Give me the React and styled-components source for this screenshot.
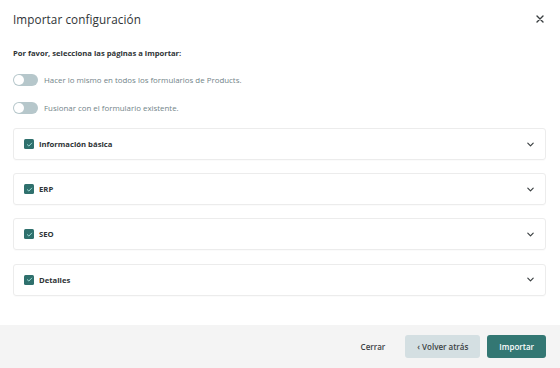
import React from 'react'
import styled, { createGlobalStyle } from 'styled-components'

const Global = createGlobalStyle`
  body {
    margin: 0;
    font-family: "Open Sans", "Noto Sans", sans-serif;
    background: #fff;
  }
`;

const Modal = styled.div`
  width: 560px;
  height: 368px;
  display: flex;
  flex-direction: column;
  background: #fff;
  color: #33393b;
`;

const Body = styled.div`
  flex: 1;
  padding: 0 14px 0 13px;
`;

const Header = styled.div`
  display: flex;
  align-items: center;
  justify-content: space-between;
  height: 38px;
  h1 {
    margin: 0;
    font-size: 11.7px;
    font-weight: 400;
    color: #2f3436;
    letter-spacing: 0.1px;
  }
`;

const Close = styled.button`
  border: 0;
  background: none;
  padding: 0;
  margin-right: 2px;
  display: flex;
  color: #444;
  cursor: pointer;
`;

const Lead = styled.p`
  margin: 9.5px 0 7.5px;
  font-size: 7.65px;
  line-height: 11px;
  font-weight: 700;
  color: #2f3436;
`;

const ToggleRow = styled.label`
  display: flex;
  align-items: center;
  gap: 6px;
  height: 28px;
  font-size: 7.9px;
  color: #728489;
`;

const Switch = styled.span`
  position: relative;
  width: 25px;
  height: 12px;
  border-radius: 6px;
  background: #b6c7cb;
  &::after {
    content: "";
    position: absolute;
    left: 1px;
    top: 1px;
    width: 10px;
    height: 10px;
    border-radius: 50%;
    background: #fff;
  }
`;

const Sections = styled.div`
  display: flex;
  flex-direction: column;
  gap: 13.2px;
  margin-top: 6px;
`;

const Card = styled.div`
  box-sizing: border-box;
  height: 32px;
  border: 1px solid #ececec;
  border-radius: 3px;
  display: flex;
  align-items: center;
  padding: 0 10px 0 10px;
  box-shadow: 0 1px 1px rgba(0, 0, 0, 0.02);
`;

const Check = styled.span`
  width: 10px;
  height: 10px;
  border-radius: 1.5px;
  background: #2f706d;
  display: flex;
  align-items: center;
  justify-content: center;
  margin-right: 5px;
`;

const CardLabel = styled.span`
  flex: 1;
  font-size: 7.7px;
  font-weight: 700;
  color: #2f3436;
`;

const Footer = styled.div`
  height: 43px;
  background: #f4f4f4;
  display: flex;
  align-items: center;
  justify-content: flex-end;
  gap: 7px;
  padding: 0 14px;
`;

const Button = styled.button`
  height: 23px;
  border: 0;
  border-radius: 3px;
  font-family: inherit;
  font-size: 8px;
  font-weight: 600;
  padding: 0 ${p => p.$pad ?? 12}px;
  margin-right: ${p => p.$after ?? 0}px;
  background: ${p => p.$variant === 'primary' ? '#337773' : p.$variant === 'secondary' ? '#d4dfe2' : 'transparent'};
  color: ${p => p.$variant === 'primary' ? '#fff' : '#3b4244'};
  cursor: pointer;
`;

const sections = ['Información básica', 'ERP', 'SEO', 'Detalles'];

const Chevron = () => (
  <svg width="9" height="9" viewBox="0 0 10 10" fill="none">
    <path d="M2 3.5 L5 6.5 L8 3.5" stroke="#3a3f41" strokeWidth="1.3" strokeLinecap="round" strokeLinejoin="round" />
  </svg>
);

export default function App() {
  return (
    <Modal>
      <Global />
      <Body>
        <Header>
          <h1>Importar configuración</h1>
          <Close aria-label="Cerrar">
            <svg width="8" height="8" viewBox="0 0 8 8">
              <path d="M1 1 L7 7 M7 1 L1 7" stroke="#3a3f41" strokeWidth="1.4" strokeLinecap="round" />
            </svg>
          </Close>
        </Header>
        <Lead>Por favor, selecciona las páginas a importar:</Lead>
        <ToggleRow><Switch />Hacer lo mismo en todos los formularios de Products.</ToggleRow>
        <ToggleRow><Switch />Fusionar con el formulario existente.</ToggleRow>
        <Sections>
          {sections.map(s => (
            <Card key={s}>
              <Check>
                <svg width="7" height="7" viewBox="0 0 8 8">
                  <path d="M1.5 4.2 L3.3 5.8 L6.5 2.4" stroke="#9fe0d8" strokeWidth="1.1" fill="none" strokeLinecap="round" strokeLinejoin="round" />
                </svg>
              </Check>
              <CardLabel>{s}</CardLabel>
              <Chevron />
            </Card>
          ))}
        </Sections>
      </Body>
      <Footer>
        <Button $pad={0} $after={13}>Cerrar</Button>
        <Button $variant="secondary" $pad={12}>‹ Volver atrás</Button>
        <Button $variant="primary" $pad={12}>Importar</Button>
      </Footer>
    </Modal>
  )
}
